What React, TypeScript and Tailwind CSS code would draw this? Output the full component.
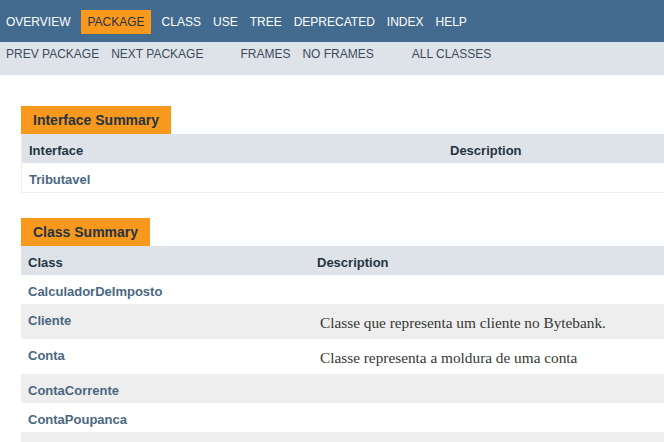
import React from 'react';

const topNav = ['OVERVIEW', 'PACKAGE', 'CLASS', 'USE', 'TREE', 'DEPRECATED', 'INDEX', 'HELP'];

type Row = { name: string; desc?: string };

const classes: Row[] = [
  { name: 'CalculadorDeImposto' },
  { name: 'Cliente', desc: 'Classe que representa um cliente no Bytebank.' },
  { name: 'Conta', desc: 'Classe representa a moldura de uma conta' },
  { name: 'ContaCorrente' },
  { name: 'ContaPoupanca' },
  { name: '' },
];

const SummaryTable: React.FC<{ title: string; head: string; firstCol: string; rows: Row[]; bordered?: boolean }> = ({
  title,
  head,
  firstCol,
  rows,
  bordered,
}) => (
  <div className="flex flex-col">
    <div className="flex">
      <div className="bg-[#f8981d] text-[#253441] font-bold text-[14px] leading-[28px] h-[28px] pl-[12px] pr-[12px]">
        {title}
      </div>
    </div>
    <div className={bordered ? 'border-l border-b border-[#eeeeee]' : ''}>
      <div className="flex bg-[#dee3e9] h-[29px] text-[13px] font-bold text-[#253441] leading-[15px]">
        <div className={`${firstCol} shrink-0 pl-[7px] pt-[9px]`}>{head}</div>
        <div className="pl-[7px] pt-[9px]">Description</div>
      </div>
      {rows.map((r, i) => (
        <div key={i} className={`flex ${i % 2 === 1 ? 'bg-[#eeeeef]' : 'bg-white'}`}>
          <div className={`${firstCol} shrink-0 pl-[7px] pt-[9px] pb-[5px] h-auto min-h-[29px] text-[13px] leading-[15px] font-bold text-[#4a6782]`}>
            {r.name}
          </div>
          {r.desc && (
            <div className="pl-[10px] pt-[10px] pb-[7px] text-[15.3px] leading-[18px] font-['Liberation_Serif',serif] text-[#353833]">
              {r.desc}
            </div>
          )}
        </div>
      ))}
    </div>
  </div>
);

export default function App() {
  return (
    <div className="w-[664px] h-[442px] overflow-hidden bg-white font-['Liberation_Sans',Arial,sans-serif]">
      {/* top navigation */}
      <div className="h-[42px] bg-[#426b8f] flex items-start pt-[10px]">
        {topNav.map((item) =>
          item === 'PACKAGE' ? (
            <div key={item} className="mx-[5px] bg-[#f8981d] text-[#253441] px-[6px] h-[24px] leading-[24px] text-[12px]">
              {item}
            </div>
          ) : (
            <div key={item} className="px-[6px] h-[24px] leading-[24px] text-[12px] text-white">
              {item}
            </div>
          )
        )}
      </div>
      {/* sub navigation */}
      <div className="h-[33px] bg-[#dee3e9] flex items-start text-[12px] leading-[24px] text-[#3c4b5c] pl-[6px]">
        <span>PREV PACKAGE</span>
        <span className="ml-[12px]">NEXT PACKAGE</span>
        <span className="ml-[37px]">FRAMES</span>
        <span className="ml-[12px]">NO FRAMES</span>
        <span className="ml-[38px]">ALL CLASSES</span>
      </div>
      {/* content */}
      <div className="pl-[21px] pt-[31px] flex flex-col gap-[25px]">
        <SummaryTable title="Interface Summary" head="Interface" firstCol="w-[421px]" rows={[{ name: 'Tributavel' }]} bordered />
        <SummaryTable title="Class Summary" head="Class" firstCol="w-[289px]" rows={classes} />
      </div>
    </div>
  );
}
